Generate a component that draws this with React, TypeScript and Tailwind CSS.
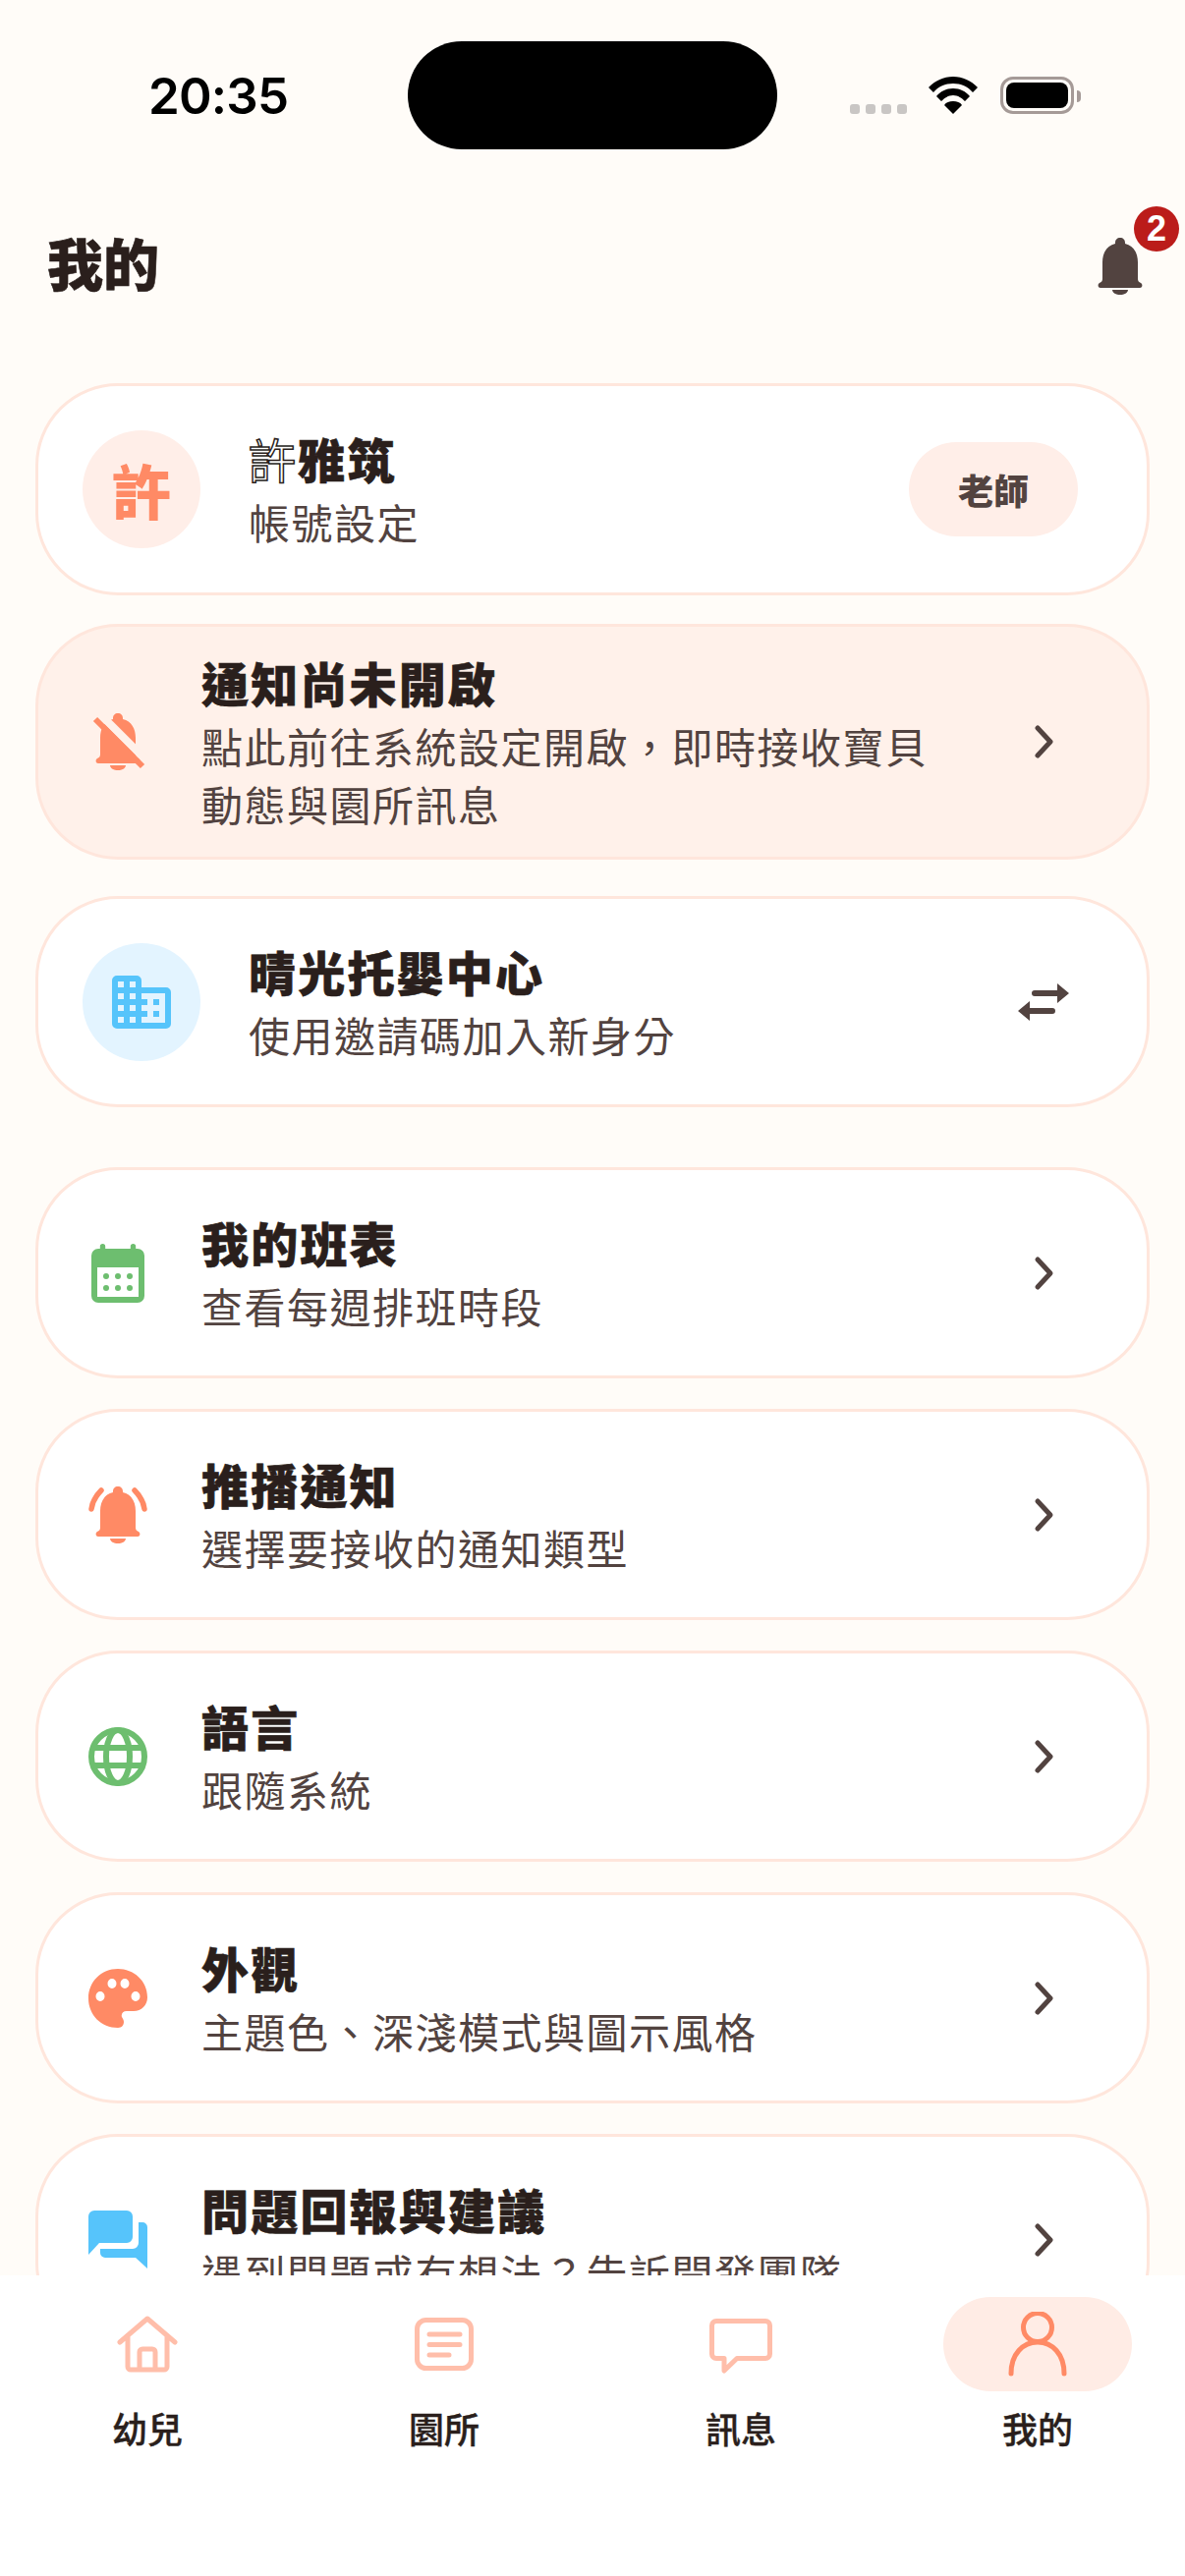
import React from "react";

const bellPath =
  "M23 0c3 0 5 2 5 5v1c9 2 13 10 13 19v17c0 2 1 3 3 4 2 1 2 5-1 5H3c-3 0-3-4-1-5 2-1 3-2 3-4V25C5 16 9 8 18 6V5c0-3 2-5 5-5zM15 53h16c0 3-4 5-8 5s-8-2-8-5z";

const titleClass = "text-[48px] leading-[69px] font-black text-[#2a1f1c] tracking-[2.2px] [-webkit-text-stroke:0.6px_#2a1f1c]";
const subClass = "text-[42px] leading-[59px] text-[#524340] tracking-[1.5px]";

function Chevron() {
  return (
    <svg width="24" height="36" viewBox="0 0 24 36" fill="none" stroke="#524340" strokeWidth="5" strokeLinecap="round" strokeLinejoin="round">
      <path d="M5 4l13 14L5 32" />
    </svg>
  );
}

function Card({ icon, title, sub, tint }: { icon: React.ReactNode; title: string; sub: React.ReactNode; tint?: boolean }) {
  return (
    <div className={`flex items-center rounded-[84px] border-[3px] border-[#ffe6dc] ${tint ? "bg-[#fff1ea] min-h-[240px]" : "bg-white min-h-[215px]"} pl-[50px] pr-[92px]`}>
      <div className="w-[62px] flex justify-center shrink-0">{icon}</div>
      <div className="ml-[54px] pb-[4px] flex-1 flex flex-col">
        <div className={titleClass}>{title}</div>
        <div className={subClass}>{sub}</div>
      </div>
      <div className="shrink-0 w-[24px] flex justify-center">
        <Chevron />
      </div>
    </div>
  );
}

function Tab({ label, children, active }: { label: string; children: React.ReactNode; active?: boolean }) {
  return (
    <div className="flex flex-col items-center">
      <div className={`w-[192px] h-[96px] rounded-[48px] flex items-center justify-center ${active ? "bg-[#ffece5]" : ""}`}>{children}</div>
      <div className="mt-[19px] text-[36px] leading-[36px] font-medium text-[#2a1f1c] [-webkit-text-stroke:0.4px_#2a1f1c]">{label}</div>
    </div>
  );
}

export default function App() {
  return (
    <div className="w-[1206px] h-[2622px] bg-[#fffcf8] flex flex-col overflow-hidden font-['Noto_Sans_CJK_TC',sans-serif]">
      <div className="flex-1 min-h-0 overflow-hidden">
        <div className="relative h-[194px]">
          <div className="absolute left-[151px] top-[68px] text-[51px] leading-[60px] font-semibold text-black font-['Inter',sans-serif] tracking-[-0.8px]">20:35</div>
          <div className="absolute left-[415px] top-[42px] w-[376px] h-[110px] rounded-[55px] bg-black" />
          <div className="absolute left-[865px] top-[106px] flex gap-[6px]">
            {[0, 1, 2, 3].map((i) => (
              <div key={i} className="w-[10px] h-[10px] rounded-[3px] bg-[#c9c6c4]" />
            ))}
          </div>
          <svg className="absolute left-[945px] top-[78px]" width="50" height="38" viewBox="0 0 50 38" fill="black">
            <path d="M25 0C15 0 7 4 0 11l5 5C10 10 17 7 25 7s15 3 20 9l5-5C43 4 35 0 25 0z" />
            <path d="M25 12c-7 0-13 3-17 8l5 5c3-3 7-6 12-6s9 3 12 6l5-5c-4-5-10-8-17-8z" />
            <path d="M25 25c-4 0-7 1-9 4l9 9 9-9c-2-3-5-4-9-4z" />
          </svg>
          <div className="absolute left-[1018px] top-[78px] w-[75px] h-[38px] rounded-[13px] border-[3px] border-[#a59a97] p-[3px]">
            <div className="w-full h-full rounded-[8px] bg-black" />
          </div>
          <div className="absolute left-[1096px] top-[92px] w-[4px] h-[12px] rounded-r-[4px] bg-[#a59a97]" />
        </div>

        <div className="relative flex items-center h-[124px] pl-[48px]">
          <div className="mt-[20px] text-[57px] leading-[80px] font-black text-[#2a1f1c] [-webkit-text-stroke:0.6px_#2a1f1c]">我的</div>
          <svg className="absolute left-[1117px] top-[48px]" width="46" height="58" viewBox="0 0 46 58" fill="#524340">
            <path d={bellPath} />
          </svg>
          <div className="absolute left-[1154px] top-[16px] w-[46px] h-[46px] rounded-full bg-[#bb1c1a] flex items-center justify-center text-white text-[36px] font-bold font-['Liberation_Sans',sans-serif]">2</div>
        </div>

        <div className="px-[36px] mt-[72px] flex flex-col">
          <div className="flex items-center h-[216px] rounded-[84px] border-[3px] border-[#ffe6dc] bg-white pl-[45px] pr-[70px]">
            <div className="w-[120px] h-[120px] rounded-full bg-[#ffeee8] flex items-center justify-center text-[#ff8a65] text-[60px] font-black shrink-0">許</div>
            <div className="ml-[49px] pb-[4px] flex-1 flex flex-col">
              <div className={titleClass}>
                <span className="font-normal text-white [-webkit-text-stroke:1.5px_#2a1f1c]">許</span>雅筑
              </div>
              <div className={subClass}>帳號設定</div>
            </div>
            <div className="w-[172px] h-[96px] rounded-[48px] bg-[#ffeee8] flex items-center justify-center text-[36px] font-black text-[#524340]">老師</div>
          </div>

          <div className="mt-[29px]">
            <Card
              tint
              icon={
                <svg width="62" height="60" viewBox="0 0 62 60" fill="#ff8a65">
                  <path transform="translate(8 1)" d={bellPath} />
                  <path d="M16 5l46 46" fill="none" stroke="#fff1ea" strokeWidth="8" />
                  <path d="M8 7l48 48" fill="none" stroke="#ff8a65" strokeWidth="6" />
                </svg>
              }
              title="通知尚未開啟"
              sub={
                <>
                  {"點此前往系統設定開啟\uFF0C即時接收寶貝"}
                  <br />
                  動態與園所訊息
                </>
              }
            />
          </div>

          <div className="mt-[37px] flex items-center h-[215px] rounded-[84px] border-[3px] border-[#ffe6dc] bg-white pl-[45px] pr-[79px]">
            <div className="w-[120px] h-[120px] rounded-full bg-[#e3f4ff] flex items-center justify-center shrink-0">
              <svg width="60" height="54" viewBox="0 0 60 54" fill="#56c4fb">
                <path fillRule="evenodd" d="M5 0h20a5 5 0 0 1 5 5v7h25a5 5 0 0 1 5 5v32a5 5 0 0 1-5 5H5a5 5 0 0 1-5-5V5a5 5 0 0 1 5-5zM6 6v6h6V6H6zm12 0v6h6V6h-6zM6 18v6h6v-6H6zm12 0v6h6v-6h-6zM6 30v6h6v-6H6zm12 0v6h6v-6h-6zM6 42v6h6v-6H6zm12 0v6h6v-6h-6zm12-24v6h6v6h-6v6h6v6h-6v6h24V18H30zm12 6h6v6h-6v-6zm0 12h6v6h-6v-6z" />
              </svg>
            </div>
            <div className="ml-[49px] pb-[4px] flex-1 flex flex-col">
              <div className={titleClass}>晴光托嬰中心</div>
              <div className={subClass}>使用邀請碼加入新身分</div>
            </div>
            <svg width="52" height="38" viewBox="0 0 52 38" fill="#524340">
              <path d="M40 0l12 10-12 10v-7H17a3 3 0 0 1 0-6h23V0zM12 18v7h23a3 3 0 0 1 0 6H12v7L0 28l12-10z" />
            </svg>
          </div>

          <div className="mt-[61px] flex flex-col gap-[31px]">
            <Card
              icon={
                <svg width="54" height="60" viewBox="0 0 54 60" fill="#6dbe6f">
                  <path fillRule="evenodd" d="M11.500 0a2.700 2.700 0 0 1 2.700 2.700V5h25.600V2.700a2.700 2.700 0 0 1 5.400 0V5H47a7 7 0 0 1 7 7v41a7 7 0 0 1-7 7H7a7 7 0 0 1-7-7V12a7 7 0 0 1 7-7h1.800V2.700A2.700 2.700 0 0 1 11.500 0zM6 24v30h42V24H6z" />
                  <circle cx="15" cy="33" r="3" />
                  <circle cx="27" cy="33" r="3" />
                  <circle cx="39" cy="33" r="3" />
                  <circle cx="15" cy="45" r="3" />
                  <circle cx="27" cy="45" r="3" />
                  <circle cx="39" cy="45" r="3" />
                </svg>
              }
              title="我的班表"
              sub="查看每週排班時段"
            />
            <Card
              icon={
                <svg width="60" height="58" viewBox="0 0 60 58">
                  <path fill="#ff8a65" transform="translate(7 0)" d={bellPath} />
                  <path d="M13 4C8 9 4 15 3 23M47 4c5 5 9 11 10 19" fill="none" stroke="#ff8a65" strokeWidth="5.500" strokeLinecap="round" />
                </svg>
              }
              title="推播通知"
              sub="選擇要接收的通知類型"
            />
            <Card
              icon={
                <svg width="60" height="60" viewBox="0 0 60 60" fill="none" stroke="#6dbe6f" strokeWidth="6">
                  <circle cx="30" cy="30" r="27" />
                  <ellipse cx="30" cy="30" rx="12" ry="27" />
                  <path d="M3 21h54M3 39h54" />
                </svg>
              }
              title="語言"
              sub="跟隨系統"
            />
            <Card
              icon={
                <svg width="60" height="60" viewBox="0 0 60 60" fill="#ff8a65">
                  <path fillRule="evenodd" d="M30 0C13 0 0 13 0 30s13 30 30 30c4 0 6-3 6-6 0-2-1-3-2-5-1-3 1-6 5-6h7c8 0 14-6 14-14C60 12 46 0 30 0zM12 33a4.500 5 0 1 0 0-10 4.500 5 0 0 0 0 10zm12-13a4.500 5 0 1 0 0-10 4.500 5 0 0 0 0 10zm13 0a4.500 5 0 1 0 0-10 4.500 5 0 0 0 0 10zm11 13a4.500 5 0 1 0 0-10 4.500 5 0 0 0 0 10z" />
                </svg>
              }
              title="外觀"
              sub="主題色、深淺模式與圖示風格"
            />
            <Card
              icon={
                <svg width="60" height="60" viewBox="0 0 60 60" fill="#56c4fb">
                  <path d="M6 0h33a6 6 0 0 1 6 6v21a6 6 0 0 1-6 6H11L0 45V6a6 6 0 0 1 6-6z" />
                  <path d="M51 12h4a5 5 0 0 1 5 5v42L48 48H17a5 5 0 0 1-5-5v-4h33a6 6 0 0 0 6-6V12z" />
                </svg>
              }
              title="問題回報與建議"
              sub={"遇到問題或有想法\uFF1F告訴開發團隊"}
            />
          </div>
        </div>
      </div>

      <div className="h-[306px] shrink-0 bg-white pt-[22px] pl-[54px] pr-[54px] flex justify-between">
        <Tab label="幼兒">
          <svg width="62" height="58" viewBox="0 0 62 58" fill="none" stroke="#ffbeaa" strokeWidth="5" strokeLinejoin="round" strokeLinecap="round">
            <path d="M3 27L31 3l28 24M11 20v32a3 3 0 0 0 3 3h34a3 3 0 0 0 3-3V20M23 55V37a3 3 0 0 1 3-3h10a3 3 0 0 1 3 3v18" />
          </svg>
        </Tab>
        <Tab label="園所">
          <svg width="60" height="54" viewBox="0 0 60 54" fill="none" stroke="#ffbeaa" strokeWidth="5" strokeLinecap="round">
            <rect x="2.500" y="2.500" width="55" height="49" rx="9" />
            <path d="M15 17h31M15 27.500h31M15 38h20" />
          </svg>
        </Tab>
        <Tab label="訊息">
          <svg className="mt-[4px]" width="64" height="56" viewBox="0 0 64 56" fill="none" stroke="#ffbeaa" strokeWidth="5" strokeLinejoin="round">
            <path d="M7 2.500h50a4.500 4.500 0 0 1 4.500 4.500v29a4.500 4.500 0 0 1-4.500 4.500H28L15 53V40.500H7A4.500 4.500 0 0 1 2.500 36V7A4.500 4.500 0 0 1 7 2.500z" />
          </svg>
        </Tab>
        <Tab label="我的" active>
          <svg width="60" height="66" viewBox="0 0 60 66" fill="none" stroke="#ff8a65" strokeWidth="5" strokeLinecap="round">
            <circle cx="30" cy="16" r="14.500" />
            <path d="M3 63c0-20 12-32 27-32s27 12 27 32" />
          </svg>
        </Tab>
      </div>
    </div>
  );
}
